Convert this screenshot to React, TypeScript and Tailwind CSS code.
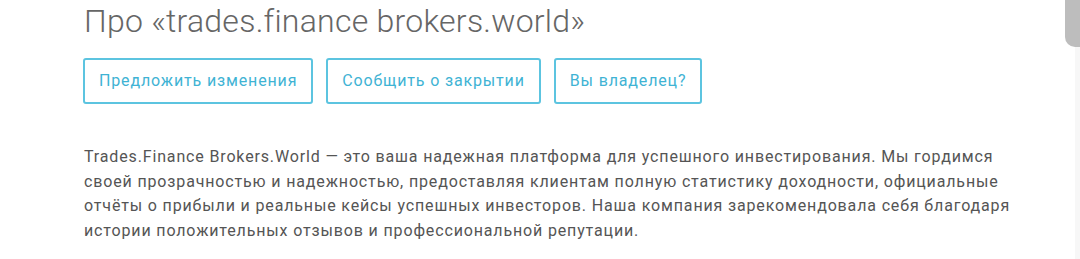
const buttons = ["Предложить изменения", "Сообщить о закрытии", "Вы владелец?"];

export default function App() {
  return (
    <div className="relative h-[259px] w-[1080px] overflow-hidden bg-white font-['Roboto',sans-serif]">
      <div className="pl-[84px] pr-[60px]">
        <h2 className="pt-[1px] text-[32px] font-light leading-[40px] tracking-[0.25px] text-[#666666]">
          Про «trades.finance brokers.world»
        </h2>
        <div className="-ml-[1px] mt-[17px] flex gap-[13px]">
          {buttons.map((b) => (
            <button
              key={b}
              className="h-[46px] rounded-[3px] border-2 border-[#5cc4e0] px-[14px] text-[16px] tracking-[0.85px] text-[#3fb3d4]"
            >
              {b}
            </button>
          ))}
        </div>
        <p className="mt-[41px] max-w-[930px] text-[16px] leading-[24.5px] tracking-[0.85px] text-[#555555]">
          Trades.Finance Brokers.World — это ваша надежная платформа для успешного инвестирования. Мы
          гордимся своей прозрачностью и надежностью, предоставляя клиентам полную статистику
          доходности, официальные отчёты о прибыли и реальные кейсы успешных инвесторов. Наша
          компания зарекомендовала себя благодаря истории положительных отзывов и
          профессиональной репутации.
        </p>
      </div>
      <div className="absolute right-0 top-0 h-full w-[5px] bg-[#f7f7f7]" />
      <div className="absolute right-0 top-0 h-[47px] w-[15px] rounded-bl-[10px] bg-[#bdbdbd]" />
    </div>
  );
}
